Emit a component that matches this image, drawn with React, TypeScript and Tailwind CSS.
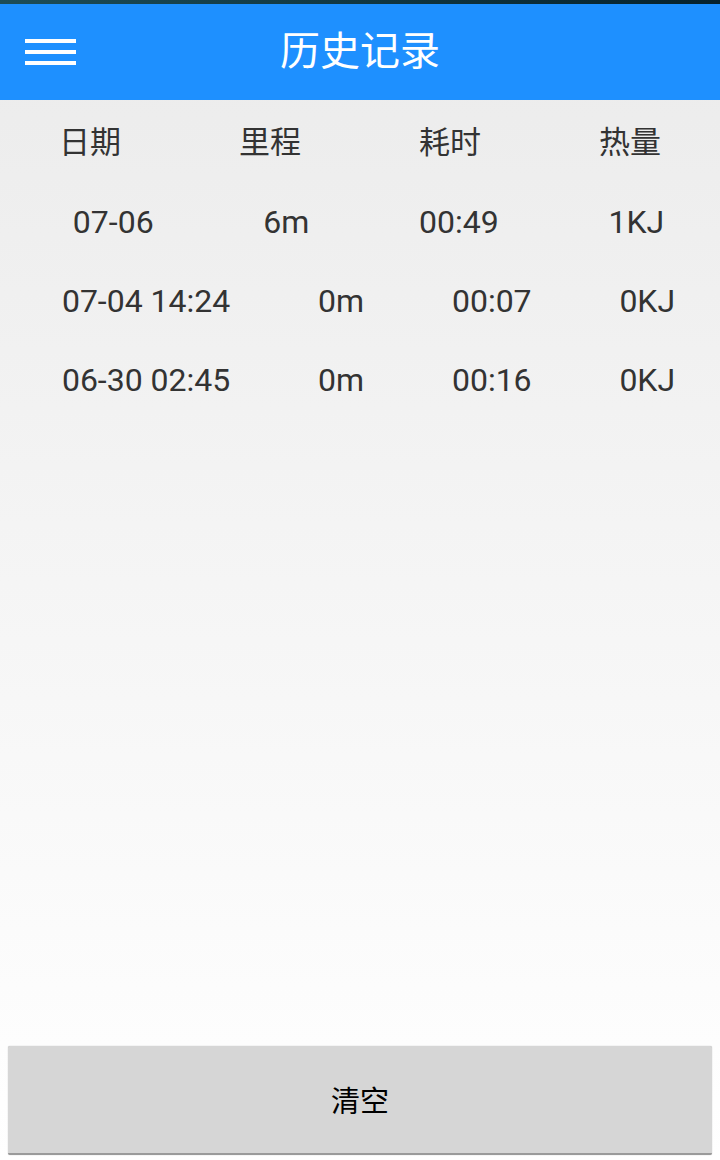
import React from "react";

const rows = [
  ["07-06", "6m", "00:49", "1KJ"],
  ["07-04 14:24", "0m", "00:07", "0KJ"],
  ["06-30 02:45", "0m", "00:16", "0KJ"],
];

export default function App() {
  const font = { fontFamily: 'Roboto, "Noto Sans CJK SC", sans-serif' };
  return (
    <div
      className="w-[720px] h-[1160px] flex flex-col bg-gradient-to-b from-[#ebebeb] to-[#ffffff] overflow-hidden"
      style={font}
    >
      <div className="h-[4px] bg-gradient-to-r from-[#1d4d57] to-[#06222d]" />
      <div className="h-[96px] bg-[#1e90ff] relative flex items-center justify-center">
        <div className="absolute left-[25px] top-[35px] w-[51px] flex flex-col gap-[7px]">
          <div className="h-[4px] bg-white" />
          <div className="h-[4px] bg-white" />
          <div className="h-[4px] bg-white" />
        </div>
        <span className="text-white text-[40px] leading-none">历史记录</span>
      </div>
      <div className="flex h-[82px] items-center pt-[5px] text-[#333333] text-[31px]">
        <div className="w-[180px] text-center">日期</div>
        <div className="w-[180px] text-center">里程</div>
        <div className="w-[180px] text-center">耗时</div>
        <div className="w-[180px] text-center">热量</div>
      </div>
      <div className="flex flex-col">
        {rows.map((r, i) => (
          <div
            key={i}
            className="flex h-[79px] items-center pl-[18px] pr-[1px] text-[#333333] text-[32px] whitespace-nowrap"
          >
            {r.map((c, j) => (
              <div key={j} className="flex-auto text-center">
                {c}
              </div>
            ))}
          </div>
        ))}
      </div>
      <div className="flex-1" />
      <div className="px-[8px] pb-[5px]">
        <div className="h-[109px] pt-[6px] bg-[#d6d6d6] rounded-[2px] border-b-[2px] border-[#9a9a9a] shadow-[0_0_1px_rgba(0,0,0,0.35)] flex items-center justify-center">
          <span className="text-black text-[29px]">清空</span>
        </div>
      </div>
    </div>
  );
}
